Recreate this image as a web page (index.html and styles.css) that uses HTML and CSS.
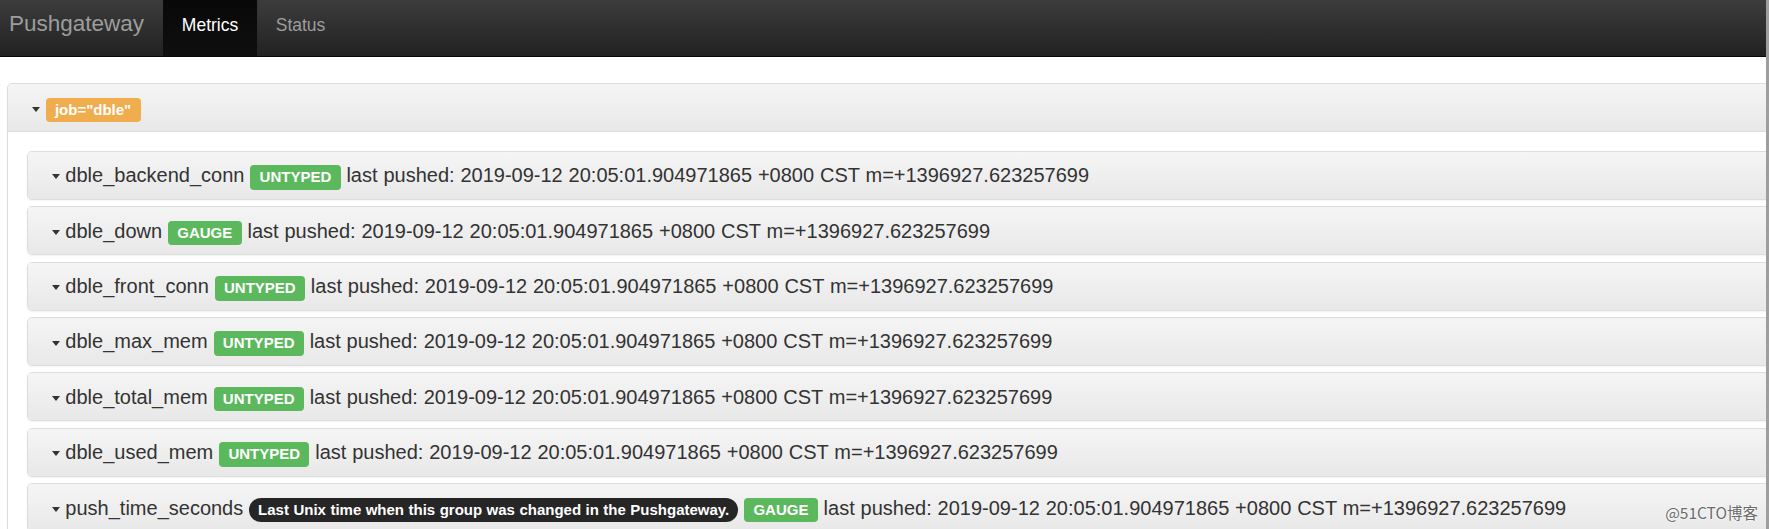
FILE: index.html
```html
<!DOCTYPE html>
<html lang="en">
<head>
    <meta charset="UTF-8">
    <title>Pushgateway</title>
    <link rel="stylesheet" href="styles.css">
</head>
<body>
    <nav class="navbar">
        <a class="navbar-brand" href="#">Pushgateway</a>
        <ul class="nav">
            <li class="active"><a href="#">Metrics</a></li>
            <li><a href="#">Status</a></li>
        </ul>
    </nav>

    <main class="content">
        <div class="panel job-panel">
            <div class="panel-heading">
                <h3 class="panel-title"><span class="caret"></span> <span class="label label-warning">job="dble"</span></h3>
            </div>
            <div class="panel-body">
                <div class="panel-group">
                    <div class="panel metric">
                        <div class="panel-heading">
                            <h3 class="panel-title"><span class="caret"></span> dble_backend_conn <span class="label label-success">UNTYPED</span> last pushed: 2019-09-12 20:05:01.904971865 +0800 CST m=+1396927.623257699</h3>
                        </div>
                    </div>
                    <div class="panel metric">
                        <div class="panel-heading">
                            <h3 class="panel-title"><span class="caret"></span> dble_down <span class="label label-success">GAUGE</span> last pushed: 2019-09-12 20:05:01.904971865 +0800 CST m=+1396927.623257699</h3>
                        </div>
                    </div>
                    <div class="panel metric">
                        <div class="panel-heading">
                            <h3 class="panel-title"><span class="caret"></span> dble_front_conn <span class="label label-success">UNTYPED</span> last pushed: 2019-09-12 20:05:01.904971865 +0800 CST m=+1396927.623257699</h3>
                        </div>
                    </div>
                    <div class="panel metric">
                        <div class="panel-heading">
                            <h3 class="panel-title"><span class="caret"></span> dble_max_mem <span class="label label-success">UNTYPED</span> last pushed: 2019-09-12 20:05:01.904971865 +0800 CST m=+1396927.623257699</h3>
                        </div>
                    </div>
                    <div class="panel metric">
                        <div class="panel-heading">
                            <h3 class="panel-title"><span class="caret"></span> dble_total_mem <span class="label label-success">UNTYPED</span> last pushed: 2019-09-12 20:05:01.904971865 +0800 CST m=+1396927.623257699</h3>
                        </div>
                    </div>
                    <div class="panel metric">
                        <div class="panel-heading">
                            <h3 class="panel-title"><span class="caret"></span> dble_used_mem <span class="label label-success">UNTYPED</span> last pushed: 2019-09-12 20:05:01.904971865 +0800 CST m=+1396927.623257699</h3>
                        </div>
                    </div>
                    <div class="panel metric">
                        <div class="panel-heading">
                            <h3 class="panel-title"><span class="caret"></span> push_time_seconds <span class="label label-help">Last Unix time when this group was changed in the Pushgateway.</span> <span class="label label-success">GAUGE</span> last pushed: 2019-09-12 20:05:01.904971865 +0800 CST m=+1396927.623257699</h3>
                        </div>
                    </div>
                </div>
            </div>
        </div>
    </main>

    <div class="watermark">@51CTO博客</div>
</body>
</html>
```

FILE: styles.css
```css
* {
    box-sizing: border-box;
}

html, body {
    height: 100%;
}

body {
    margin: 0;
    background: #fff;
    color: #333;
    font-family: "Liberation Sans", Arial, sans-serif;
    font-size: 17.5px;
    overflow: hidden;
    border-right: 3px solid #9e9e9e;
    position: relative;
}

/* navbar */
.navbar {
    display: flex;
    align-items: flex-start;
    height: 57px;
    background-image: linear-gradient(to bottom, #3c3c3c 0%, #222 100%);
    border-bottom: 1px solid #080808;
}

.navbar-brand {
    display: block;
    padding: 0 19px 0 9px;
    line-height: 48px;
    font-size: 22.5px;
    color: #9d9d9d;
    text-decoration: none;
}

.nav {
    display: flex;
    list-style: none;
    margin: 0;
    padding: 0;
}

.nav a {
    display: block;
    padding: 0 18.75px;
    height: 56px;
    line-height: 50px;
    color: #9d9d9d;
    text-decoration: none;
}

.nav .active a {
    color: #fff;
    background-image: linear-gradient(to bottom, #080808 0%, #0f0f0f 100%);
}

/* panels */
.content {
    margin: 26px -40px 0 7px;
}

.panel {
    background: #fff;
    border: 1px solid #ddd;
    border-radius: 5px;
    box-shadow: 0 1px 2px rgba(0,0,0,.05);
}

.panel-heading {
    padding: 12.5px 18.75px;
    background-image: linear-gradient(to bottom, #f5f5f5 0%, #e8e8e8 100%);
    border-bottom: 1px solid #ddd;
    border-radius: 4px 4px 0 0;
}

.panel-title {
    margin: 0;
    font-size: 20px;
    font-weight: 500;
    line-height: 22px;
    white-space: nowrap;
    word-spacing: 0.3px;
}

.panel-body {
    padding: 18.75px;
}

.metric {
    margin-top: 6.4px;
}

.metric:first-child {
    margin-top: 0;
}

.metric .panel-heading {
    border-bottom: 0;
    border-radius: 4px;
}

.caret {
    display: inline-block;
    width: 0;
    height: 0;
    margin-left: 5px;
    vertical-align: middle;
    border-top: 5px solid #333;
    border-left: 4.5px solid transparent;
    border-right: 4.5px solid transparent;
}

.label {
    display: inline;
    padding: 3px 9.3px 4.5px;
    font-size: 15px;
    font-weight: bold;
    line-height: 1;
    color: #fff;
    text-align: center;
    white-space: nowrap;
    vertical-align: baseline;
    border-radius: 4px;
}

.label-warning {
    background-color: #f0ad4e;
}

.label-success {
    background-color: #5cb85c;
}

.label-help {
    background-color: #262626;
    border-radius: 12px;
    padding: 2.5px 9px 4px;
}

.watermark {
    position: absolute;
    right: 8px;
    bottom: 6px;
    font-family: "Noto Sans CJK SC", "Liberation Sans", sans-serif;
    font-size: 15.5px;
    color: #6a6a6a;
    text-shadow: 0 0 2px #fff, 0 0 2px #fff;
}
```
